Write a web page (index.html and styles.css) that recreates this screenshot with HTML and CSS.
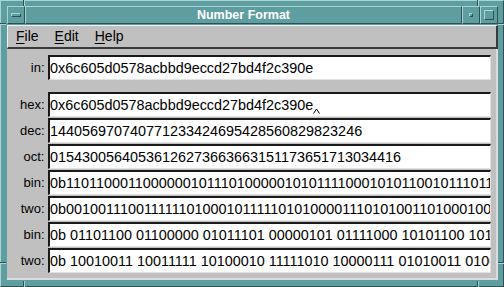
FILE: index.html
```html
<!DOCTYPE html>
<html>
<head>
  <meta charset="UTF-8">
  <title>Number Format</title>
  <link rel="stylesheet" href="styles.css">
</head>
<body>
  <div class="frame">
    <span class="notch nv n-top-l"></span>
    <span class="notch nv n-top-r"></span>
    <span class="notch nv n-bot-l"></span>
    <span class="notch nv n-bot-r"></span>
    <span class="notch nh n-left-t"></span>
    <span class="notch nh n-right-t"></span>
    <span class="notch nh n-left-b"></span>
    <span class="notch nh n-right-b"></span>

    <div class="titlebar">
      <div class="tb-btn"><span class="menu-glyph"></span></div>
      <div class="tb-title">Number Format</div>
      <div class="tb-btn"><span class="min-glyph"></span></div>
      <div class="tb-btn"><span class="max-glyph"></span></div>
    </div>

    <div class="menubar">
      <span class="menu-item"><u>F</u>ile</span>
      <span class="menu-item"><u>E</u>dit</span>
      <span class="menu-item"><u>H</u>elp</span>
    </div>

    <div class="content">
      <div class="row">
        <div class="label">in:</div>
        <div class="field">0x6c605d0578acbbd9eccd27bd4f2c390e</div>
      </div>

      <div class="group">
        <div class="row">
          <div class="label">hex:</div>
          <div class="field">0x6c605d0578acbbd9eccd27bd4f2c390e<svg class="caret" width="7" height="6" viewBox="0 0 7 6"><polyline points="0.5,5.5 3.5,1 6.5,5.5" fill="none" stroke="#000" stroke-width="1"/></svg></div>
        </div>
        <div class="row">
          <div class="label">dec:</div>
          <div class="field">144056970740771233424695428560829823246</div>
        </div>
        <div class="row">
          <div class="label">oct:</div>
          <div class="field">01543005640536126273663663151173651713034416</div>
        </div>
        <div class="row">
          <div class="label">bin:</div>
          <div class="field">0b110110001100000010111010000010101111000101011001011101111011001</div>
        </div>
        <div class="row">
          <div class="label">two:</div>
          <div class="field">0b001001110011111101000101111101010000111010100110100010000100110</div>
        </div>
        <div class="row">
          <div class="label">bin:</div>
          <div class="field">0b 01101100 01100000 01011101 00000101 01111000 10101100 10111011 11011001</div>
        </div>
        <div class="row">
          <div class="label">two:</div>
          <div class="field">0b 10010011 10011111 10100010 11111010 10000111 01010011 01000100 00100110</div>
        </div>
      </div>
    </div>
  </div>
</body>
</html>
```

FILE: styles.css
```css
* {padding: 0; margin: 0; box-sizing: border-box;}

html, body {
  width: 100%;
  height: 100%;
  background: #5f9ea0;
  overflow: hidden;
}
body {
  font-family: "Liberation Sans", Arial, sans-serif;
  color: #000;
}

/* window frame */
.frame {
  position: relative;
  display: flex;
  flex-direction: column;
  width: 504px;
  height: 287px;
  padding: 5px 5px 6px 6px;
  border: 1px solid;
  border-color: #a9d3d4 #2f5152 #2f5152 #a9d3d4;
}
.notch {
  position: absolute;
}
.notch.nv {
  width: 2px;
  height: 6px;
  border-left: 1px solid #2f5152;
  border-right: 1px solid #a9d3d4;
}
.notch.nh {
  width: 6px;
  height: 2px;
  border-top: 1px solid #2f5152;
  border-bottom: 1px solid #a9d3d4;
}
.n-top-l { top: -1px; left: 22px; }
.n-top-r { top: -1px; left: 476px; }
.n-bot-l { top: 280px; left: 22px; height: 7px; }
.n-bot-r { top: 280px; left: 476px; height: 7px; }
.n-left-t { left: -1px; top: 22px; }
.n-right-t { right: -1px; top: 22px; }
.n-left-b { left: -1px; top: 261px; }
.n-right-b { right: -1px; top: 261px; }

/* title bar */
.titlebar {
  display: flex;
  height: 18px;
  margin-bottom: 1px;
}
.tb-btn, .tb-title {
  border: 1px solid;
  border-color: #a9d3d4 #2f5152 #2f5152 #a9d3d4;
}
.tb-btn {
  display: flex;
  align-items: center;
  justify-content: center;
  width: 18px;
}
.tb-title {
  flex: 1;
  font-size: 12.5px;
  font-weight: bold;
  line-height: 16px;
  color: #fff;
  text-align: center;
}
.menu-glyph, .min-glyph, .max-glyph {
  display: block;
  border: 1px solid;
  border-color: #a9d3d4 #2f5152 #2f5152 #a9d3d4;
}
.menu-glyph {
  width: 10px;
  height: 4px;
}
.min-glyph {
  width: 4px;
  height: 4px;
}
.max-glyph {
  width: 10px;
  height: 10px;
}

/* menu bar */
.menubar {
  display: flex;
  height: 24px;
  background: #c0c0c0;
  border-style: solid;
  border-width: 1px 2px 2px 1px;
  border-color: #f0f0f0 #3a3a3a #3a3a3a #f0f0f0;
  font-size: 14px;
  line-height: 21px;
}
.menu-item {
  padding: 0 8px;
}
.menu-item u {
  text-underline-offset: 2px;
}

/* form */
.content {
  flex: 1;
  padding: 6px 5px 0 0;
  background: #c0c0c0;
  border-right: 2px solid #dcdcdc;
  border-bottom: 2px solid #dcdcdc;
}
.row {
  display: flex;
  height: 25px;
}
.label {
  width: 41px;
  padding: 1px 3.5px 0 0;
  font-size: 13px;
  line-height: 24px;
  text-align: right;
}
.field {
  flex: 1;
  overflow: hidden;
  background: #fff;
  border-style: solid;
  border-width: 2px 1px 1px 2px;
  border-color: #1a1a1a #e2e2e2 #e2e2e2 #1a1a1a;
  font-size: 14.4px;
  line-height: 22px;
  white-space: nowrap;
}
.group {
  display: flex;
  flex-direction: column;
  gap: 1px;
  margin-top: 12px;
}
.caret {
  vertical-align: -4px;
  margin-left: 0;
}
```
